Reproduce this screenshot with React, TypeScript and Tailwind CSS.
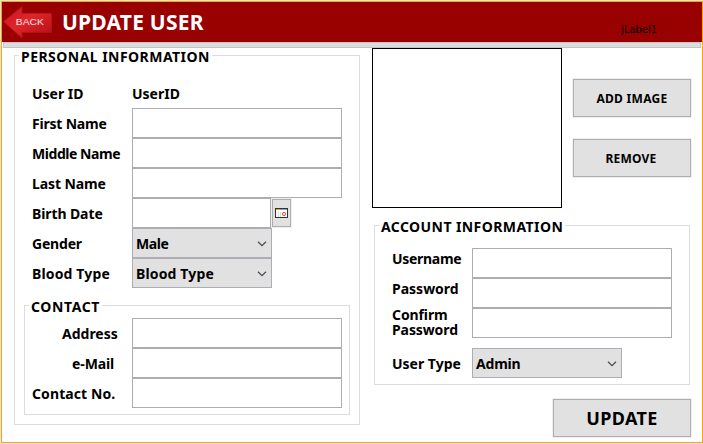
import React from "react";

const FONT = "font-['Noto_Sans','DejaVu_Sans',sans-serif]";

function Chevron() {
  return (
    <svg width="10" height="6" viewBox="0 0 10 6" className="mt-[2px] mr-[4px] shrink-0" fill="none" stroke="#4a4a4a" strokeWidth="1.2">
      <path d="M1 0.8 L5 4.6 L9 0.8" />
    </svg>
  );
}

function Combo({ value, className }: { value: string; className: string }) {
  return (
    <button type="button" className={`flex h-[30px] items-center justify-between border border-[#adadb3] bg-[#e1e1e1] pl-[3px] text-left ${className}`}>
      <span className="leading-[17px] whitespace-nowrap">{value}</span>
      <Chevron />
    </button>
  );
}

function Field({ className, label }: { className: string; label: string }) {
  return <input aria-label={label} className={`block h-[30px] border border-[#abadb3] bg-white px-1 outline-none ${className}`} />;
}

function Row({ label, labelClass = "", children }: { label: string; labelClass?: string; children: React.ReactNode }) {
  return (
    <div className="flex h-[30px] items-center">
      <span className={`shrink-0 leading-[17px] whitespace-nowrap ${labelClass}`}>{label}</span>
      {children}
    </div>
  );
}

function Group({ title, titleClass, className, children }: { title: string; titleClass: string; className: string; children: React.ReactNode }) {
  return (
    <fieldset className={`border border-[#dcdcdc] ${className}`}>
      <legend className={`ml-[4px] h-[15px] pr-[2px] pl-[2px] leading-[18px] whitespace-nowrap ${titleClass}`}>{title}</legend>
      {children}
    </fieldset>
  );
}

function PushButton({ className, children }: { className: string; children: React.ReactNode }) {
  return (
    <button type="button" className={`flex items-center justify-center border border-[#adadad] bg-[#e1e1e1] shadow-[0_0_0_1px_#f0f0f0] ${className}`}>
      {children}
    </button>
  );
}

function BackArrow() {
  return (
    <svg width="50" height="38" viewBox="0 0 50 38" className="ml-px shrink-0">
      <defs>
        <linearGradient id="arrow" x1="0" y1="0" x2="1" y2="1">
          <stop offset="0" stopColor="#c8141c" />
          <stop offset="0.45" stopColor="#e0252b" />
          <stop offset="1" stopColor="#b30f14" />
        </linearGradient>
      </defs>
      <path d="M0.5 19.5 L19 4.5 V11.3 H48.5 V30.4 H19 V36 Z" fill="url(#arrow)" stroke="#b5161b" strokeWidth="0.8" />
      <text x="12.8" y="23.2" fill="#f7e4e4" fontSize="9.2" fontWeight="400" fontFamily="Liberation Sans, Arial, sans-serif" textLength="28" lengthAdjust="spacingAndGlyphs">
        BACK
      </text>
    </svg>
  );
}

export default function App() {
  return (
    <div className={`h-[444px] w-[703px] overflow-hidden bg-[#e1e4f5] pt-px pl-px text-[14px] font-bold text-black ${FONT}`}>
      <div className="flex h-[442px] w-[702px] flex-col border border-[#ffa500] bg-white">
        <header className="flex h-[40px] shrink-0 items-start bg-[#990000]">
          <BackArrow />
          <h1 className="ml-[9px] pt-[8px] text-[21px] leading-[24px] tracking-[0.22px] whitespace-nowrap text-white">UPDATE USER</h1>
          <span className="ml-auto mr-[45px] pt-[21px] font-['DejaVu_Sans_Condensed','DejaVu_Sans',sans-serif] text-[11px] leading-[14px] font-normal [font-stretch:condensed]">jLabel1</span>
        </header>
        <div className="mx-px h-[6px] shrink-0 border border-[#c3c3c3] bg-[#dcdcdc]" />
        <main className="flex items-start pl-[12px]">
          <Group title="PERSONAL INFORMATION" titleClass="tracking-[0.46px]" className="h-[377px] w-[346px] shrink-0">
            <div className="flex flex-col pt-[15px] pl-[17px]">
              <Row label="User ID" labelClass="w-[100px]">
                <span className="leading-[17px]">UserID</span>
              </Row>
              <Row label="First Name" labelClass="w-[100px] tracking-[-0.2px]"><Field label="First Name" className="w-[210px]" /></Row>
              <Row label="Middle Name" labelClass="w-[100px] tracking-[-0.45px]"><Field label="Middle Name" className="w-[210px]" /></Row>
              <Row label="Last Name" labelClass="w-[100px] tracking-[-0.1px]"><Field label="Last Name" className="w-[210px]" /></Row>
              <Row label="Birth Date" labelClass="w-[100px] tracking-[-0.1px]">
                <Field label="Birth Date" className="w-[139px]" />
                <PushButton className="ml-px h-[28px] w-[19px]">
                  <svg width="14" height="11" viewBox="0 0 14 11" className="shrink-0">
                    <rect x="0.5" y="0.5" width="12" height="9" fill="#fff" stroke="#333" />
                    <path d="M1 1.5h4" stroke="#e8a33c" />
                    <path d="M5 1.5h7" stroke="#7f9fc8" />
                    <path d="M3.5 4v5M5.5 4v5" stroke="#ddd" />
                    <circle cx="9" cy="6" r="1.6" fill="none" stroke="#e04848" />
                  </svg>
                </PushButton>
              </Row>
              <Row label="Gender" labelClass="w-[100px] tracking-[-0.2px]"><Combo value="Male" className="w-[140px] tracking-[-0.4px]" /></Row>
              <Row label="Blood Type" labelClass="w-[100px] tracking-[0.15px]"><Combo value="Blood Type" className="w-[140px] tracking-[0.15px]" /></Row>
            </div>
            <Group title="CONTACT" titleClass="tracking-[0.6px]" className="mt-[10px] ml-[9px] h-[117px] w-[326px]">
              <div className="flex flex-col pt-[5px]">
                <Row label="Address" labelClass="w-[107px] pl-[37px]"><Field label="Address" className="w-[210px]" /></Row>
                <Row label="e-Mail" labelClass="w-[107px] pl-[47px] tracking-[-0.1px]"><Field label="e-Mail" className="w-[210px]" /></Row>
                <Row label="Contact No." labelClass="w-[107px] pl-[7px] tracking-[0.1px]"><Field label="Contact No." className="w-[210px]" /></Row>
              </div>
            </Group>
          </Group>
          <div className="ml-[12px] flex flex-col">
            <div className="flex">
              <div className="h-[160px] w-[190px] border border-black" />
              <div className="ml-[11px] flex flex-col gap-[22px] pt-[31px] text-[12px]">
                <PushButton className="h-[38px] w-[118px] pt-[2px] tracking-[0.3px]">ADD IMAGE</PushButton>
                <PushButton className="h-[38px] w-[118px] pt-[2px] pr-[2px] tracking-[0.2px]">REMOVE</PushButton>
              </div>
            </div>
            <Group title="ACCOUNT INFORMATION" titleClass="tracking-[0.42px]" className="mt-[10px] ml-[2px] h-[167px] w-[316px]">
              <div className="flex flex-col pt-[15px] pl-[17px]">
                <Row label="Username" labelClass="w-[80px] pb-[10px] tracking-[-0.3px]"><Field label="Username" className="w-[200px]" /></Row>
                <Row label="Password" labelClass="w-[80px] pb-[10px]"><Field label="Password" className="w-[200px]" /></Row>
                <div className="flex h-[30px] items-center">
                  <span className="w-[80px] shrink-0 pb-[3px] leading-[15px] tracking-[-0.1px]">Confirm<br />Password</span>
                  <Field label="Confirm Password" className="w-[200px]" />
                </div>
                <div className="mt-[10px]">
                  <Row label="User Type" labelClass="w-[80px]"><Combo value="Admin" className="w-[150px] tracking-[-0.2px]" /></Row>
                </div>
              </div>
            </Group>
            <PushButton className="mt-[14px] ml-[181px] h-[38px] w-[138px] pt-px text-[18px] tracking-[0.4px]">UPDATE</PushButton>
          </div>
        </main>
      </div>
    </div>
  );
}
